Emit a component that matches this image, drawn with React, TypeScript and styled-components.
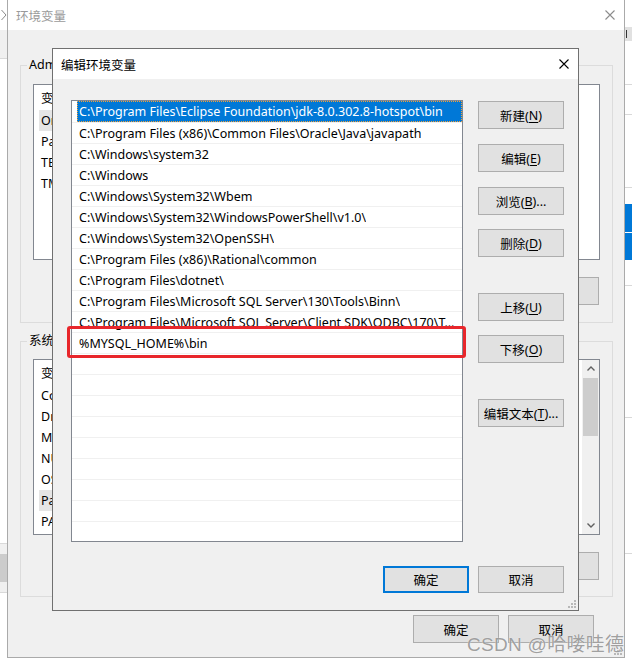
import React from "react";
import styled, { createGlobalStyle } from "styled-components";

const FONT = `"Noto Sans", "Noto Sans CJK SC", sans-serif`;

const GlobalStyle = createGlobalStyle`
  html, body { margin: 0; padding: 0; background: #ffffff; }
  body { font-family: ${FONT}; }
  * { box-sizing: border-box; }
`;

const Desktop = styled.div`
  position: relative;
  width: 632px;
  height: 666px;
  overflow: hidden;
  display: flex;
  align-items: flex-start;
  background: #ffffff;
  font-family: ${FONT};
  font-size: 12.5px;
  color: #000;
`;

const Strip = styled.div`
  flex: none;
  width: 7px;
  height: 666px;
  display: flex;
  flex-direction: column;
  background: #ffffff;
  overflow: hidden;
`;

const Band = styled.div<{ $h: number; $bg?: string; $line?: boolean }>`
  flex: none;
  height: ${(p) => p.$h}px;
  background: ${(p) => p.$bg ?? "#ffffff"};
  border-bottom: ${(p) => (p.$line ? "1px solid #d9d9d9" : "none")};
  display: flex;
  align-items: center;
  justify-content: flex-start;
  overflow: hidden;
`;

const BgWindow = styled.div`
  position: relative;
  flex: none;
  width: 618px;
  height: 658px;
  border: 1px solid #aaaaaa;
  border-top: none;
  display: flex;
  flex-direction: column;
  background: #f0f0f0;
`;

const TitleBar = styled.div<{ $inactive?: boolean }>`
  flex: none;
  height: 30px;
  background: #ffffff;
  display: flex;
  align-items: center;
  justify-content: space-between;
  padding: 0 9px 0 8px;
  color: ${(p) => (p.$inactive ? "#9a9a9a" : "#000000")};
  font-size: 12.5px;
`;

const BgBody = styled.div`
  flex: 1;
  display: flex;
  flex-direction: column;
  padding: 35px 11px 0 12px;
`;

const GroupBox = styled.div<{ $mt: number; $pt: number; $pb: number }>`
  position: relative;
  border: 1px solid #dcdcdc;
  margin-top: ${(p) => p.$mt}px;
  padding: ${(p) => p.$pt}px 12px ${(p) => p.$pb}px 12px;
  display: flex;
  flex-direction: column;
`;

const Legend = styled.span`
  position: absolute;
  left: 6px;
  top: -10px;
  padding: 0 2px;
  background: #f0f0f0;
  line-height: 18px;
  font-size: 12.5px;
  white-space: nowrap;
`;

const BgList = styled.div`
  flex: none;
  height: 176px;
  background: #ffffff;
  border: 1px solid #828790;
  display: flex;
  overflow: hidden;
`;

const BgRows = styled.div`
  flex: 1;
  display: flex;
  flex-direction: column;
  align-items: flex-start;
`;

const BgHeader = styled.div`
  flex: none;
  height: 25px;
  padding-left: 7px;
  display: flex;
  align-items: center;
  gap: 150px;
`;

const BgRow = styled.div<{ $hl?: boolean }>`
  flex: none;
  height: 21px;
  margin-left: 5px;
  padding: 0 3px 0 2px;
  display: flex;
  align-items: center;
  white-space: nowrap;
  background: ${(p) => (p.$hl ? "#e5e5e5" : "transparent")};
`;

const VScroll = styled.div`
  flex: none;
  width: 17px;
  background: #f0f0f0;
  display: flex;
  flex-direction: column;
`;

const ScrollBtn = styled.div`
  flex: none;
  height: 17px;
  display: flex;
  align-items: center;
  justify-content: center;
`;

const ScrollTrack = styled.div`
  flex: 1;
  display: flex;
  flex-direction: column;
  padding: 1px 1px 0 1px;
`;

const Thumb = styled.div`
  height: 58px;
  background: #cdcdcd;
`;

const BtnRow = styled.div<{ $mt: number; $pr?: number }>`
  display: flex;
  justify-content: flex-end;
  gap: 9px;
  margin-top: ${(p) => p.$mt}px;
  padding-right: ${(p) => p.$pr ?? 1}px;
`;

const WinButton = styled.button<{ $h?: number; $mt?: number; $default?: boolean }>`
  flex: none;
  width: 86px;
  height: ${(p) => p.$h ?? 28}px;
  margin-top: ${(p) => p.$mt ?? 0}px;
  background: #e1e1e1;
  border: ${(p) => (p.$default ? "2px solid #0078d7" : "1px solid #adadad")};
  font-family: ${FONT};
  font-size: 12.5px;
  color: #000;
  padding: 0;
  display: flex;
  align-items: center;
  justify-content: center;
  white-space: nowrap;
`;

const Acc = styled.span`
  text-decoration: underline;
  text-underline-offset: 2px;
`;

const Dialog = styled.div`
  position: absolute;
  left: 52px;
  top: 48px;
  width: 527px;
  height: 563px;
  border: 1px solid #707070;
  background: #f0f0f0;
  display: flex;
  flex-direction: column;
`;

const DialogBody = styled.div`
  flex: 1;
  display: flex;
  flex-direction: column;
  padding: 21px 14px 17px 18px;
`;

const MainRow = styled.div`
  display: flex;
  gap: 15px;
`;

const PathList = styled.div`
  flex: none;
  width: 392px;
  height: 442px;
  border: 1px solid #828790;
  background: #ffffff;
  overflow: hidden;
  display: flex;
  flex-direction: column;
`;

const PathRow = styled.div<{ $first?: boolean }>`
  flex: none;
  height: 21px;
  border-top: ${(p) => (p.$first ? "none" : "1px solid #f0f0f0")};
  padding-left: 5px;
  display: flex;
`;

const PathText = styled.div<{ $selected?: boolean }>`
  flex: 1;
  min-width: 0;
  padding-left: 1px;
  display: flex;
  align-items: center;
  white-space: nowrap;
  overflow: hidden;
  background: ${(p) => (p.$selected ? "#0078d7" : "transparent")};
  color: ${(p) => (p.$selected ? "#ffffff" : "#000000")};
  border: 1px ${(p) => (p.$selected ? "dotted #f2a23a" : "solid transparent")};
  line-height: 19px;
`;

const Ellip = styled.span`
  overflow: hidden;
  text-overflow: ellipsis;
  white-space: nowrap;
`;

const ButtonColumn = styled.div`
  display: flex;
  flex-direction: column;
`;

const Footer = styled.div<{ $mt: number; $pr?: number }>`
  display: flex;
  justify-content: flex-end;
  gap: 9px;
  margin-top: ${(p) => p.$mt}px;
  padding-right: ${(p) => p.$pr ?? 0}px;
`;

const Annotation = styled.div`
  position: absolute;
  left: 14px;
  top: 277px;
  width: 399px;
  height: 32px;
  border: 3px solid #e8262b;
  border-radius: 3px;
  pointer-events: none;
`;

const Grip = styled.svg<{ $r: number; $b: number }>`
  position: absolute;
  right: ${(p) => p.$r}px;
  bottom: ${(p) => p.$b}px;
`;

const Watermark = styled.div`
  position: absolute;
  left: 467px;
  top: 633px;
  font-family: "Liberation Sans", "Noto Sans CJK SC", sans-serif;
  font-size: 19px;
  line-height: 24px;
  color: rgba(135, 135, 135, 0.8);
  text-shadow: 0 0 1px rgba(255, 255, 255, 0.9);
  white-space: nowrap;
  letter-spacing: 0.3px;
`;

const CloseX = ({ color }: { color: string }) => (
  <svg width="10" height="10" viewBox="0 0 10 10">
    <path d="M0.5 0.5 L9.5 9.5 M9.5 0.5 L0.5 9.5" stroke={color} strokeWidth="1.1" fill="none" />
  </svg>
);

const Chevron = ({ up }: { up?: boolean }) => (
  <svg width="8" height="5" viewBox="0 0 8 5">
    <path
      d={up ? "M0.5 4.5 L4 1 L7.5 4.5" : "M0.5 0.5 L4 4 L7.5 0.5"}
      stroke="#606060"
      strokeWidth="1.4"
      fill="none"
    />
  </svg>
);

const GripDots = ({ r, b }: { r: number; b: number }) => (
  <Grip $r={r} $b={b} width="8" height="8" viewBox="0 0 8 8">
    <rect x="6" y="0" width="2" height="2" fill="#b8b8b8" />
    <rect x="3" y="3" width="2" height="2" fill="#b8b8b8" />
    <rect x="6" y="3" width="2" height="2" fill="#b8b8b8" />
    <rect x="0" y="6" width="2" height="2" fill="#b8b8b8" />
    <rect x="3" y="6" width="2" height="2" fill="#b8b8b8" />
    <rect x="6" y="6" width="2" height="2" fill="#b8b8b8" />
  </Grip>
);

const userVars = ["OneDrive", "Path", "TEMP", "TMP"];
const sysVars = ["ComSpec", "DriverData", "MYSQL_HOME", "NUMBER_OF_PROCESSORS", "OS", "Path", "PATHEXT"];

const paths = [
  "C:\\Program Files\\Eclipse Foundation\\jdk-8.0.302.8-hotspot\\bin",
  "C:\\Program Files (x86)\\Common Files\\Oracle\\Java\\javapath",
  "C:\\Windows\\system32",
  "C:\\Windows",
  "C:\\Windows\\System32\\Wbem",
  "C:\\Windows\\System32\\WindowsPowerShell\\v1.0\\",
  "C:\\Windows\\System32\\OpenSSH\\",
  "C:\\Program Files (x86)\\Rational\\common",
  "C:\\Program Files\\dotnet\\",
  "C:\\Program Files\\Microsoft SQL Server\\130\\Tools\\Binn\\",
  "C:\\Program Files\\Microsoft SQL Server\\Client SDK\\ODBC\\170\\Tools\\Binn\\",
  "%MYSQL_HOME%\\bin",
];

const TOTAL_ROWS = 22;

const sideButtons: { label: string; key: string; tail?: string; mt: number }[] = [
  { label: "新建", key: "N", mt: 1 },
  { label: "编辑", key: "E", mt: 15 },
  { label: "浏览", key: "B", tail: "...", mt: 15 },
  { label: "删除", key: "D", mt: 14 },
  { label: "上移", key: "U", mt: 36 },
  { label: "下移", key: "O", mt: 14 },
  { label: "编辑文本", key: "T", tail: "...", mt: 36 },
];

export default function App() {
  const rows = Array.from({ length: TOTAL_ROWS }, (_, i) => paths[i] ?? "");
  return (
    <>
      <GlobalStyle />
      <Desktop>
        <Strip>
          <Band $h={30}>
            <svg width="7" height="12" viewBox="0 0 7 12">
              <path d="M1.5 1 L6 6 L1.5 11" stroke="#8a8a8a" strokeWidth="1" fill="none" />
            </svg>
          </Band>
          <Band $h={29} $bg="#f0f0f0" $line />
          <Band $h={485} $line />
          <Band $h={10} $bg="#f0f0f0" />
          <Band $h={28} $bg="#cccccc" />
          <Band $h={11} $bg="#f0f0f0" $line />
        </Strip>

        <BgWindow>
          <TitleBar $inactive>
            <span>环境变量</span>
            <CloseX color="#8c8c8c" />
          </TitleBar>
          <BgBody>
            <GroupBox $mt={0} $pt={18} $pb={17}>
              <Legend>Administrator 的用户变量(U)</Legend>
              <BgList>
                <BgRows>
                  <BgHeader>
                    <span>变量</span>
                    <span>值</span>
                  </BgHeader>
                  {userVars.map((v, i) => (
                    <BgRow key={v} $hl={i === 0}>
                      {v}
                    </BgRow>
                  ))}
                </BgRows>
              </BgList>
              <BtnRow $mt={17}>
                <WinButton>新建(N)...</WinButton>
                <WinButton>编辑(E)...</WinButton>
                <WinButton>删除(D)</WinButton>
              </BtnRow>
            </GroupBox>

            <GroupBox $mt={18} $pt={17} $pb={16}>
              <Legend>系统变量(S)</Legend>
              <BgList>
                <BgRows>
                  <BgHeader>
                    <span>变量</span>
                    <span>值</span>
                  </BgHeader>
                  {sysVars.map((v, i) => (
                    <BgRow key={v + i} $hl={i === 5}>
                      {v}
                    </BgRow>
                  ))}
                </BgRows>
                <VScroll>
                  <ScrollBtn>
                    <Chevron up />
                  </ScrollBtn>
                  <ScrollTrack>
                    <Thumb />
                  </ScrollTrack>
                  <ScrollBtn>
                    <Chevron />
                  </ScrollBtn>
                </VScroll>
              </BgList>
              <BtnRow $mt={17}>
                <WinButton>新建(W)...</WinButton>
                <WinButton>编辑(I)...</WinButton>
                <WinButton>删除(L)</WinButton>
              </BtnRow>
            </GroupBox>

            <Footer $mt={18} $pr={19}>
              <WinButton>确定</WinButton>
              <WinButton>取消</WinButton>
            </Footer>
          </BgBody>
          <GripDots r={2} b={2} />
        </BgWindow>

        <Strip>
          <Band $h={27} />
          <Band $h={14} $bg="#e1e1e1">
            <svg width="7" height="14" viewBox="0 0 7 14">
              <path d="M1.5 3 L1.5 11" stroke="#333" strokeWidth="1" />
            </svg>
          </Band>
          <Band $h={44} $line />
          <Band $h={30} $line />
          <Band $h={73} $line />
          <Band $h={16} />
          <Band $h={28} $bg="#0078d7" />
          <Band $h={1} />
          <Band $h={27} $bg="#0078d7" />
          <Band $h={26} $line />
          <Band $h={132} $line />
          <Band $h={136} $line />
        </Strip>

        <Dialog>
          <TitleBar>
            <span>编辑环境变量</span>
            <CloseX color="#000000" />
          </TitleBar>
          <DialogBody>
            <MainRow>
              <PathList>
                {rows.map((p, i) => (
                  <PathRow key={i} $first={i === 0}>
                    <PathText $selected={i === 0}>
                      <Ellip>{p}</Ellip>
                    </PathText>
                  </PathRow>
                ))}
              </PathList>
              <ButtonColumn>
                {sideButtons.map((b) => (
                  <WinButton key={b.key} $mt={b.mt}>
                    {b.label}(<Acc>{b.key}</Acc>){b.tail ?? ""}
                  </WinButton>
                ))}
              </ButtonColumn>
            </MainRow>
            <Footer $mt={24}>
              <WinButton $h={27} $default>
                确定
              </WinButton>
              <WinButton $h={27}>取消</WinButton>
            </Footer>
          </DialogBody>
          <Annotation />
          <GripDots r={2} b={2} />
        </Dialog>

        <Watermark>CSDN @哈喽哇德</Watermark>
      </Desktop>
    </>
  );
}
